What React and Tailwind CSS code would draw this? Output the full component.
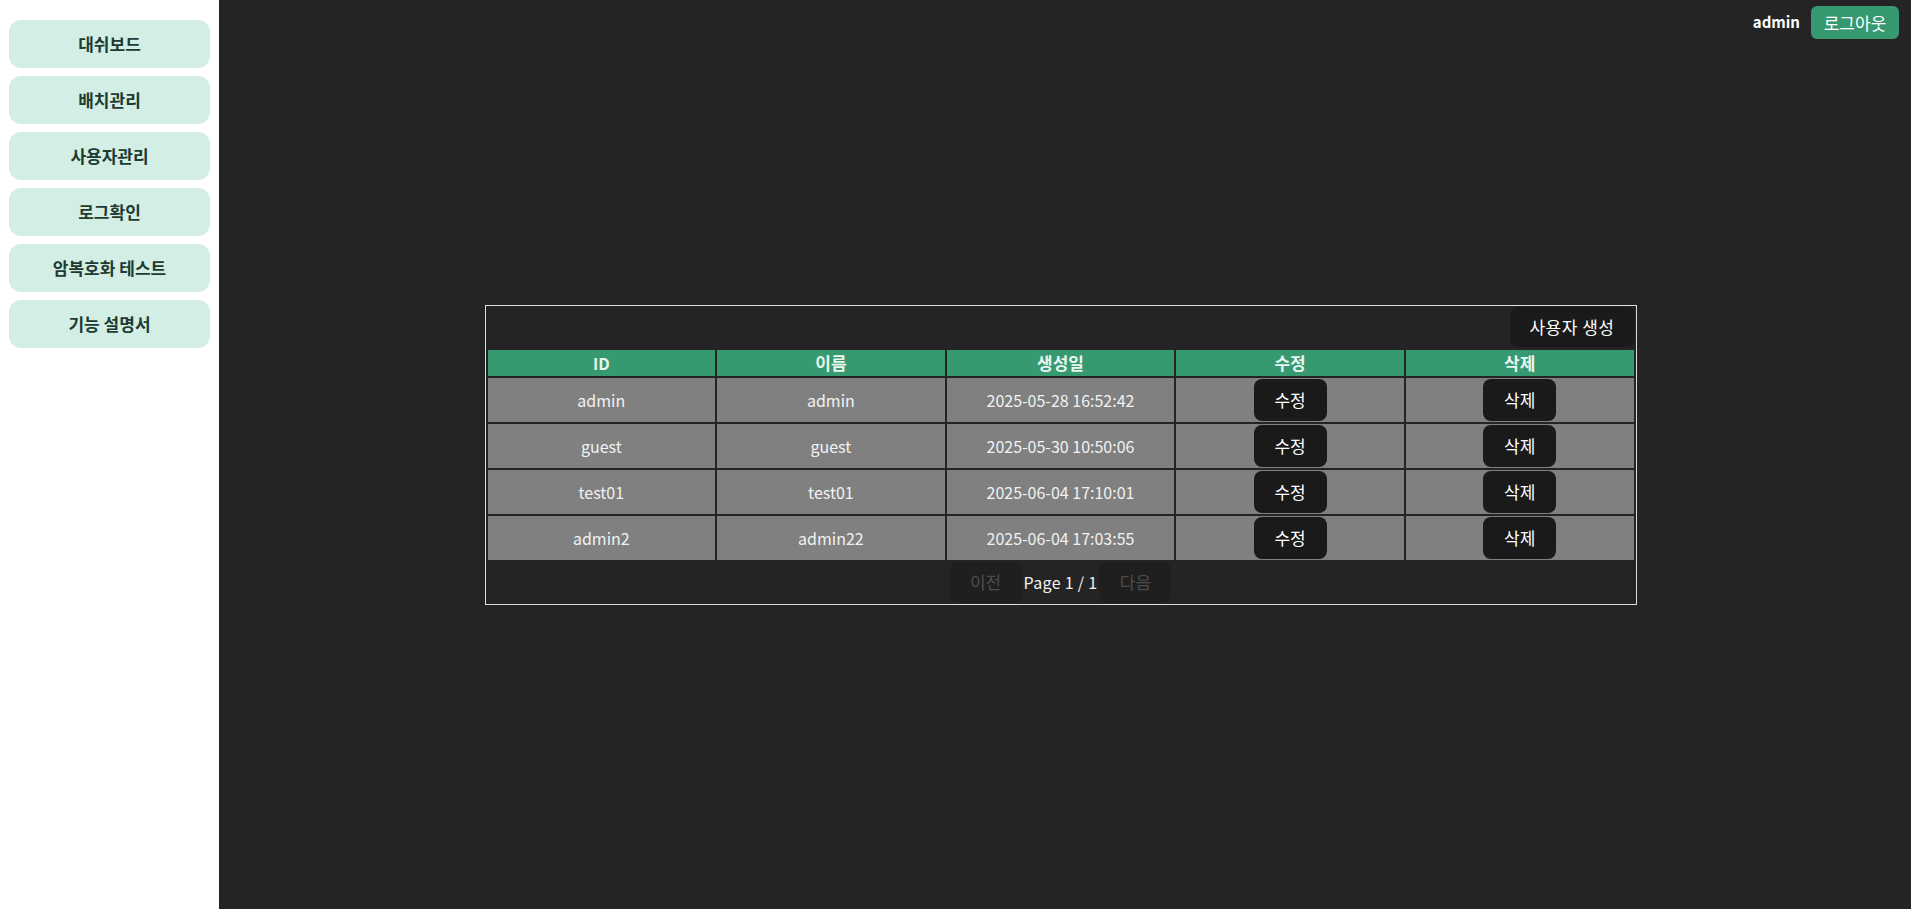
import React from 'react';

const navItems = ['대쉬보드', '배치관리', '사용자관리', '로그확인', '암복호화 테스트', '기능 설명서'];

const users = [
  { id: 'admin', name: 'admin', created: '2025-05-28 16:52:42' },
  { id: 'guest', name: 'guest', created: '2025-05-30 10:50:06' },
  { id: 'test01', name: 'test01', created: '2025-06-04 17:10:01' },
  { id: 'admin2', name: 'admin22', created: '2025-06-04 17:03:55' },
];

const font = { fontFamily: '"Noto Sans CJK KR", "Noto Sans", sans-serif' };

function Sidebar() {
  return (
    <aside className="w-[219px] shrink-0 bg-white px-[9px] pt-[20px] flex flex-col gap-[8px]">
      {navItems.map((label) => (
        <button
          key={label}
          className="h-[48px] w-full rounded-[12px] bg-[#d2eee5] text-[17px] font-bold text-[#1d3b31]"
        >
          {label}
        </button>
      ))}
    </aside>
  );
}

function UserTable() {
  return (
    <div className="w-[1152px] border border-[#dcdcdc] bg-[#242424] mr-[9px]">
      <div className="flex justify-end pt-px pr-px mb-px">
        <button className="h-[40px] w-[125px] rounded-[8px] bg-[#1a1a1a] text-[17px] tracking-[0.5px] text-white">
          사용자 생성
        </button>
      </div>
      <table className="w-full table-fixed border-separate border-spacing-[2px] text-[16px]">
        <thead>
          <tr className="bg-[#36996f] text-[#e8f7f0]">
            <th className="h-[26px] p-0 font-bold">ID</th>
            <th className="h-[26px] p-0 font-bold text-[17px]">이름</th>
            <th className="h-[26px] p-0 font-bold text-[17px]">생성일</th>
            <th className="h-[26px] p-0 font-bold text-[17px]">수정</th>
            <th className="h-[26px] p-0 font-bold text-[17px]">삭제</th>
          </tr>
        </thead>
        <tbody>
          {users.map((u) => (
            <tr key={u.id} className="bg-[#808080] text-[#f2f2f2]">
              <td className="h-[44px] p-0 text-center">{u.id}</td>
              <td className="h-[44px] p-0 text-center">{u.name}</td>
              <td className="h-[44px] p-0 text-center">{u.created}</td>
              <td className="h-[44px] p-0 text-center">
                <button className="h-[42px] w-[73px] rounded-[8px] bg-[#1a1a1a] text-[17px] text-white align-middle">수정</button>
              </td>
              <td className="h-[44px] p-0 text-center">
                <button className="h-[42px] w-[73px] rounded-[8px] bg-[#1a1a1a] text-[17px] text-white align-middle">삭제</button>
              </td>
            </tr>
          ))}
        </tbody>
      </table>
      <div className="flex justify-center items-center gap-[2px] mb-px text-[16px]">
        <button disabled className="h-[41px] w-[72px] rounded-[8px] bg-[#1f1f1f] text-[17px] text-[#4d4d4d]">이전</button>
        <span className="text-[#f2f2f2] tracking-[0.3px]">Page 1 / 1</span>
        <button disabled className="h-[41px] w-[72px] rounded-[8px] bg-[#1f1f1f] text-[17px] text-[#4d4d4d]">다음</button>
      </div>
    </div>
  );
}

export default function App() {
  return (
    <div className="flex min-h-screen bg-[#242424]" style={font}>
      <Sidebar />
      <main className="relative flex-1 flex items-center justify-center">
        <div className="absolute top-[6px] right-[12px] flex items-center gap-[11px]">
          <span className="text-[15px] font-bold text-white">admin</span>
          <button className="h-[33px] w-[88px] rounded-[6px] bg-[#36996f] text-[17px] text-white">로그아웃</button>
        </div>
        <UserTable />
      </main>
    </div>
  );
}
